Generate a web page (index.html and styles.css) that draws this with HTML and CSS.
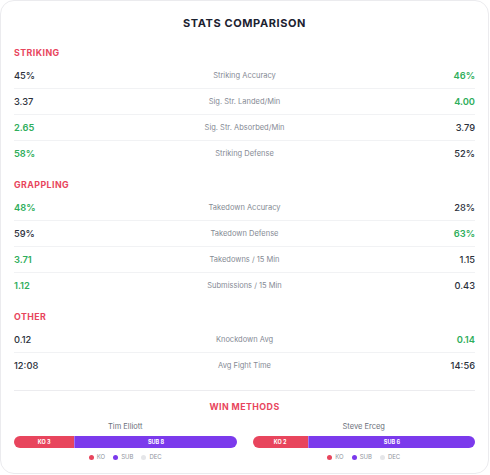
FILE: index.html
```html
<!DOCTYPE html>
<html>
<head>
<meta charset="utf-8">
<link rel="stylesheet" href="styles.css">
</head>
<body>
<div class="card">
  <h2 class="title">STATS COMPARISON</h2>

  <section class="section">
    <h3 class="sec-head">STRIKING</h3>
    <div class="row"><span class="v">45%</span><span class="lbl">Striking Accuracy</span><span class="v r win">46%</span></div>
    <div class="row"><span class="v">3.37</span><span class="lbl">Sig. Str. Landed/Min</span><span class="v r win">4.00</span></div>
    <div class="row"><span class="v win">2.65</span><span class="lbl">Sig. Str. Absorbed/Min</span><span class="v r">3.79</span></div>
    <div class="row"><span class="v win">58%</span><span class="lbl">Striking Defense</span><span class="v r">52%</span></div>
  </section>

  <section class="section">
    <h3 class="sec-head">GRAPPLING</h3>
    <div class="row"><span class="v win">48%</span><span class="lbl">Takedown Accuracy</span><span class="v r">28%</span></div>
    <div class="row"><span class="v">59%</span><span class="lbl">Takedown Defense</span><span class="v r win">63%</span></div>
    <div class="row"><span class="v win">3.71</span><span class="lbl">Takedowns / 15 Min</span><span class="v r">1.15</span></div>
    <div class="row"><span class="v win">1.12</span><span class="lbl">Submissions / 15 Min</span><span class="v r">0.43</span></div>
  </section>

  <section class="section">
    <h3 class="sec-head">OTHER</h3>
    <div class="row"><span class="v">0.12</span><span class="lbl">Knockdown Avg</span><span class="v r win">0.14</span></div>
    <div class="row"><span class="v">12:08</span><span class="lbl">Avg Fight Time</span><span class="v r">14:56</span></div>
  </section>

  <div class="wins">
    <h3 class="wins-head">WIN METHODS</h3>
    <div class="wins-grid">
      <div class="fighter">
        <div class="name">Tim Elliott</div>
        <div class="bar">
          <div class="seg ko" style="flex: 3">KO 3</div>
          <div class="seg sub" style="flex: 8">SUB 8</div>
        </div>
        <div class="legend">
          <span class="li"><i class="dot d-ko"></i>KO</span>
          <span class="li"><i class="dot d-sub"></i>SUB</span>
          <span class="li"><i class="dot d-dec"></i>DEC</span>
        </div>
      </div>
      <div class="fighter">
        <div class="name">Steve Erceg</div>
        <div class="bar">
          <div class="seg ko" style="flex: 2">KO 2</div>
          <div class="seg sub" style="flex: 6">SUB 6</div>
        </div>
        <div class="legend">
          <span class="li"><i class="dot d-ko"></i>KO</span>
          <span class="li"><i class="dot d-sub"></i>SUB</span>
          <span class="li"><i class="dot d-dec"></i>DEC</span>
        </div>
      </div>
    </div>
  </div>
</div>
</body>
</html>
```

FILE: styles.css
```css
* { box-sizing: border-box; }
html, body { margin: 0; padding: 0; background: #ffffff; }
body { font-family: Inter, "Noto Sans", "Liberation Sans", sans-serif; color: #2b303b; }

.card {
  width: 489px;
  height: 474px;
  border: 1px solid #ebebee;
  border-radius: 14px;
  padding: 14px 13px 0 13px;
  background: #fff;
  overflow: hidden;
}

.title {
  margin: 0 0 16px 0;
  text-align: center;
  font-size: 11px;
  line-height: 16px;
  font-weight: 700;
  letter-spacing: 0.6px;
  color: #1c2230;
}

.section { margin-bottom: 13px; }

.sec-head {
  margin: 0 0 4px 0;
  font-size: 8.8px;
  line-height: 12px;
  font-weight: 700;
  letter-spacing: 0.45px;
  color: #e8455d;
}

.row {
  display: grid;
  grid-template-columns: 1fr auto 1fr;
  align-items: center;
  height: 26px;
  border-bottom: 1px solid #f1f2f4;
}
.row:last-child { border-bottom: none; height: 25px; }

.v {
  font-size: 9.3px;
  font-weight: 500;
  color: #2b303b;
}
.v.r { text-align: right; }
.v.win { color: #2fae5c; font-weight: 600; }

.lbl {
  font-size: 7.5px;
  color: #858a94;
  text-align: center;
}

.wins {
  border-top: 1px solid #ececef;
  margin-top: -1px;
}

.wins-head {
  margin: 10px 0 0 0;
  text-align: center;
  font-size: 8.8px;
  line-height: 12px;
  font-weight: 700;
  letter-spacing: 0.45px;
  color: #e8455d;
}

.wins-grid {
  display: grid;
  grid-template-columns: 1fr 1fr;
  column-gap: 16px;
  margin-top: 9px;
}

.name {
  text-align: center;
  font-size: 7.5px;
  line-height: 10px;
  color: #6b707a;
}

.bar {
  display: flex;
  height: 12px;
  margin-top: 4px;
  border-radius: 6px;
  overflow: hidden;
}
.seg {
  display: flex;
  align-items: center;
  justify-content: center;
  color: #fff;
  font-size: 5.5px;
  font-weight: 700;
}
.seg.ko { background: #e8455d; }
.seg.sub { background: #7b3aec; }
.seg + .seg { border-left: 1px solid rgba(255,255,255,0.3); }

.legend {
  display: flex;
  justify-content: center;
  gap: 8px;
  margin-top: 4px;
  font-size: 6px;
  line-height: 10px;
  color: #90959e;
}
.li { display: flex; align-items: center; gap: 3px; }
.dot {
  display: inline-block;
  width: 5px;
  height: 5px;
  border-radius: 50%;
}
.d-ko { background: #e8455d; }
.d-sub { background: #7b3aec; }
.d-dec { background: #e5e6e9; }
```
